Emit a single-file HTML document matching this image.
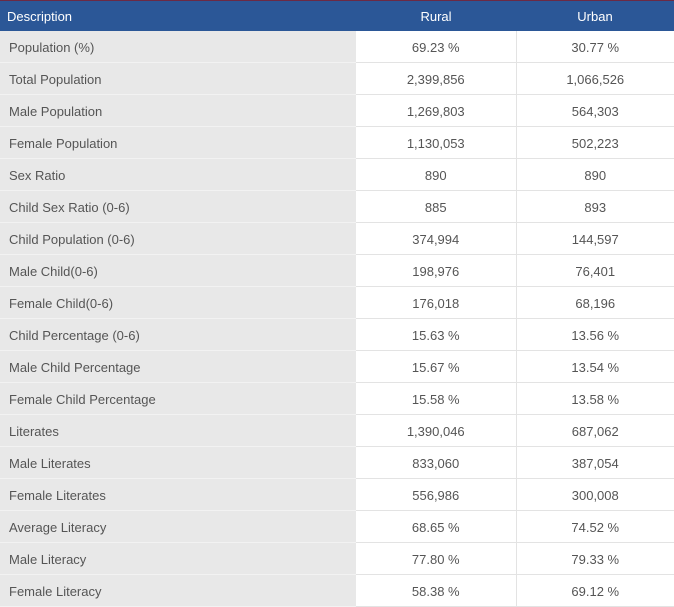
<!DOCTYPE html><html><head><style>
body{margin:0;background:#fff;font-family:"Liberation Sans",sans-serif;font-size:13px;color:#555}
table{border-collapse:collapse;width:674px;table-layout:fixed;border-top:1px solid #6b2a45}
th{background:#2b5797;color:#fff;font-weight:normal;height:30px;padding:0;font-size:13px}
th:first-child{text-align:left;padding-left:7px}
td{height:29px;padding:2px 0 0 0;border-bottom:1px solid #e3e3e3;text-align:center}
td:first-child{background:#e8e8e8;text-align:left;padding-left:9px;border-bottom:1px solid #f2f2f2}
td:nth-child(2){border-right:1px solid #e3e3e3}
</style></head><body><table>
<colgroup><col style="width:356px"><col style="width:160px"><col></colgroup>
<tr><th>Description</th><th>Rural</th><th>Urban</th></tr>
<tr><td>Population (%)</td><td>69.23 %</td><td>30.77 %</td></tr>
<tr><td>Total Population</td><td>2,399,856</td><td>1,066,526</td></tr>
<tr><td>Male Population</td><td>1,269,803</td><td>564,303</td></tr>
<tr><td>Female Population</td><td>1,130,053</td><td>502,223</td></tr>
<tr><td>Sex Ratio</td><td>890</td><td>890</td></tr>
<tr><td>Child Sex Ratio (0-6)</td><td>885</td><td>893</td></tr>
<tr><td>Child Population (0-6)</td><td>374,994</td><td>144,597</td></tr>
<tr><td>Male Child(0-6)</td><td>198,976</td><td>76,401</td></tr>
<tr><td>Female Child(0-6)</td><td>176,018</td><td>68,196</td></tr>
<tr><td>Child Percentage (0-6)</td><td>15.63 %</td><td>13.56 %</td></tr>
<tr><td>Male Child Percentage</td><td>15.67 %</td><td>13.54 %</td></tr>
<tr><td>Female Child Percentage</td><td>15.58 %</td><td>13.58 %</td></tr>
<tr><td>Literates</td><td>1,390,046</td><td>687,062</td></tr>
<tr><td>Male Literates</td><td>833,060</td><td>387,054</td></tr>
<tr><td>Female Literates</td><td>556,986</td><td>300,008</td></tr>
<tr><td>Average Literacy</td><td>68.65 %</td><td>74.52 %</td></tr>
<tr><td>Male Literacy</td><td>77.80 %</td><td>79.33 %</td></tr>
<tr><td>Female Literacy</td><td>58.38 %</td><td>69.12 %</td></tr>
</table></body></html>
